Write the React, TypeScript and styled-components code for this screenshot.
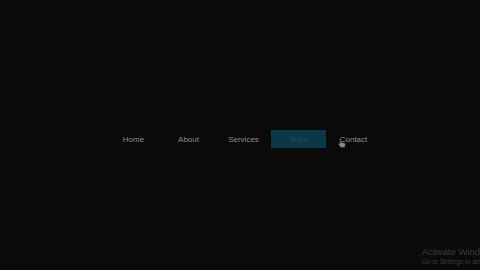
import styled, { createGlobalStyle } from "styled-components";

const Global = createGlobalStyle`
  html, body {
    margin: 0;
    padding: 0;
    background: #0a0a0a;
  }
  body {
    font-family: "Liberation Sans", Arial, sans-serif;
  }
`;

const Page = styled.div`
  width: 480px;
  height: 270px;
  display: flex;
  align-items: center;
  justify-content: center;
  position: relative;
  overflow: hidden;
`;

const Nav = styled.ul`
  list-style: none;
  margin: 8px 0 0 7px;
  padding: 0;
  display: flex;
`;

const Item = styled.li<{ $active?: boolean }>`
  width: 55px;
  height: 18px;
  display: flex;
  align-items: center;
  justify-content: center;
  font-size: 8px;
  color: ${(p) => (p.$active ? "#1f4a58" : "#8c8c8c")};
  background: ${(p) => (p.$active ? "#0c3846" : "transparent")};
  position: relative;
`;

const Cursor = styled.svg`
  position: absolute;
  left: 12px;
  top: 8px;
`;

const Watermark = styled.div`
  position: absolute;
  left: 422px;
  top: 247px;
  color: #3a3a3a;
  line-height: 1.15;
  white-space: nowrap;
`;

const WmTitle = styled.div`
  font-size: 9.5px;
`;

const WmSub = styled.div`
  font-size: 6.5px;
`;

const links = ["Home", "About", "Services", "Team", "Contact"];

export default function App() {
  return (
    <Page>
      <Global />
      <Nav>
        {links.map((l) => (
          <Item key={l} $active={l === "Team"}>
            {l}
            {l === "Contact" && (
              <Cursor width="8" height="10" viewBox="0 0 8 10">
                <path
                  d="M2 0.5 C2.6 0.5 3 0.9 3 1.5 V4.2 L6.2 4.9 C7 5.1 7.4 5.7 7.3 6.4 L6.8 9.5 H2.6 L0.6 6.6 C0.3 6.1 0.6 5.5 1.2 5.6 L1.8 6 V1.5 C1.8 0.9 1.5 0.5 2 0.5 Z"
                  fill="#8a8a8a"
                  stroke="#1a1a1a"
                  strokeWidth="0.5"
                />
              </Cursor>
            )}
          </Item>
        ))}
      </Nav>
      <Watermark>
        <WmTitle>Activate Windows</WmTitle>
        <WmSub>Go to Settings to activate Windows.</WmSub>
      </Watermark>
    </Page>
  );
}
